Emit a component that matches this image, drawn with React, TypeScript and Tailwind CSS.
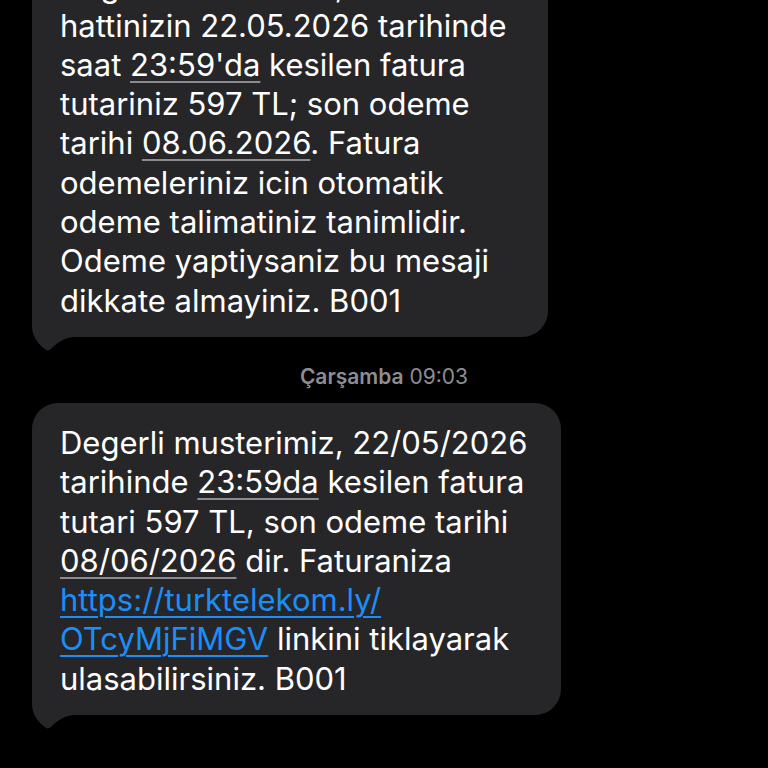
import React from 'react'

type Part = { text: string; kind?: 'date' | 'link' }
type Line = Part[]

const first: Line[] = [
  [{ text: 'Degerli musterimiz, 0850 numarali' }],
  [{ text: 'hattinizin 22.05.2026 tarihinde' }],
  [{ text: 'saat ' }, { text: "23:59'da", kind: 'date' }, { text: ' kesilen fatura' }],
  [{ text: 'tutariniz 597 TL; son odeme' }],
  [{ text: 'tarihi ' }, { text: '08.06.2026', kind: 'date' }, { text: '. Fatura' }],
  [{ text: 'odemeleriniz icin otomatik' }],
  [{ text: 'odeme talimatiniz tanimlidir.' }],
  [{ text: 'Odeme yaptiysaniz bu mesaji' }],
  [{ text: 'dikkate almayiniz. B001' }],
]

const second: Line[] = [
  [{ text: 'Degerli musterimiz, 22/05/2026' }],
  [{ text: 'tarihinde ' }, { text: '23:59da', kind: 'date' }, { text: ' kesilen fatura' }],
  [{ text: 'tutari 597 TL, son odeme tarihi' }],
  [{ text: '08/06/2026', kind: 'date' }, { text: ' dir. Faturaniza' }],
  [{ text: 'https://turktelekom.ly/', kind: 'link' }],
  [{ text: 'OTcyMjFiMGV', kind: 'link' }, { text: ' linkini tiklayarak' }],
  [{ text: 'ulasabilirsiniz. B001' }],
]

// bubble tail, sits behind the bubble body
function Tail() {
  return (
    <svg
      className="absolute left-0 bottom-[-14px]"
      width="44"
      height="45"
      viewBox="0 0 44 45"
    >
      <path
        d="M0 0 L0 20 C0 30 6 38 14 44 C16 45 18 44 20 42 C26 36 32 32 42 31 L44 31 L44 0 Z"
        fill="#262628"
      />
    </svg>
  )
}

function Bubble({ lines, width }: { lines: Line[]; width: string }) {
  return (
    <div className={`relative self-start ${width}`}>
      <Tail />
      <div className="relative rounded-[26px] bg-[#262628] pl-[28px] pr-4 pt-[20px] pb-[17px]">
        {lines.map((line, i) => (
          <div key={i} className="whitespace-nowrap leading-[39.3px]">
            {line.map((p, j) =>
              p.kind === 'link' ? (
                <span
                  key={j}
                  className="text-[#1d8df7] underline decoration-[#1d8df7] decoration-[1.5px] underline-offset-[5px]"
                >
                  {p.text}
                </span>
              ) : p.kind === 'date' ? (
                <span
                  key={j}
                  className="underline decoration-[#8b8b90] decoration-[1.5px] underline-offset-[5px]"
                >
                  {p.text}
                </span>
              ) : (
                <span key={j}>{p.text}</span>
              )
            )}
          </div>
        ))}
      </div>
    </div>
  )
}

export default function App() {
  return (
    <div
      className="h-[768px] overflow-hidden bg-black flex flex-col justify-end px-8 pb-[53px] text-white text-[31px]"
      style={{ fontFamily: 'Inter, "Noto Sans", sans-serif' }}
    >
      <Bubble lines={first} width="w-[516px]" />

      {/* Timestamp */}
      <p className="mt-[27px] mb-[14px] text-center text-[21px] leading-[25px] text-[#8d8d92]">
        <span className="font-semibold">Çarşamba</span> 09:03
      </p>

      <Bubble lines={second} width="w-[529px]" />
    </div>
  )
}
